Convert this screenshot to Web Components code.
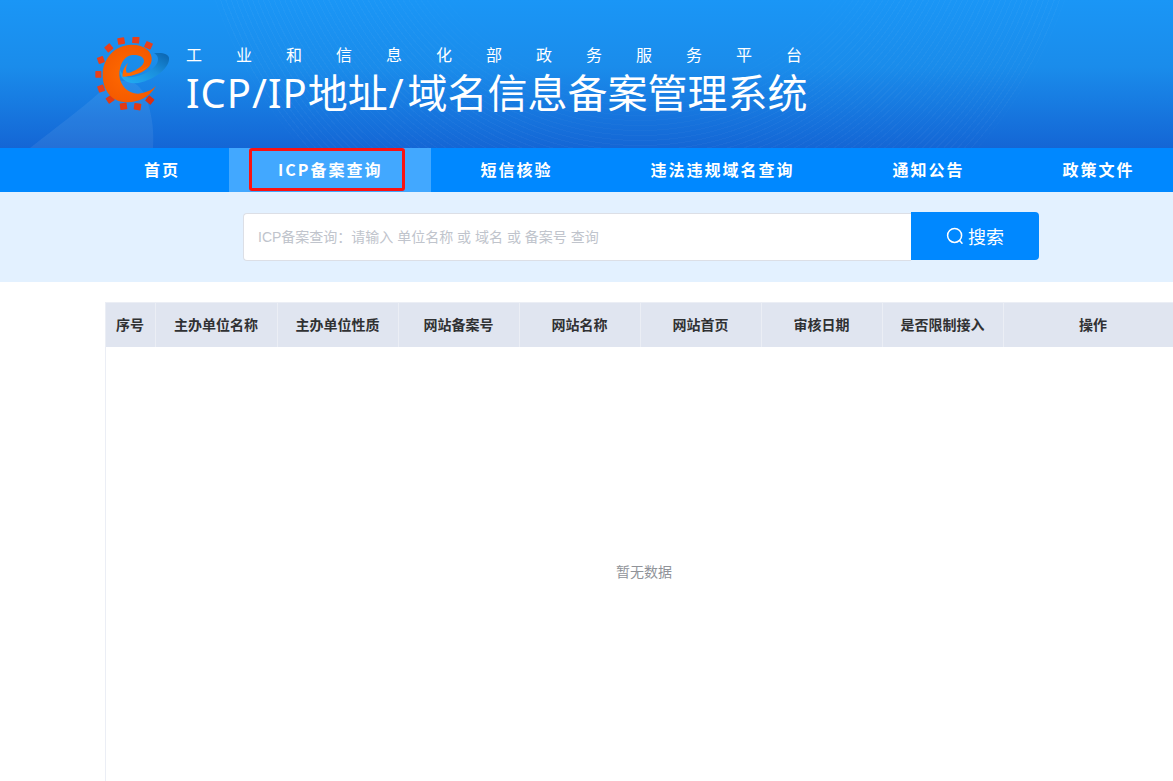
<!DOCTYPE html>
<html lang="zh"><head><meta charset="utf-8"><title>ICP/IP地址/域名信息备案管理系统</title>
<style>
html,body{margin:0;height:781px;overflow:hidden;background:#fff}
body{font-family:"Noto Sans CJK SC","Liberation Sans",sans-serif}
</style></head><body>
<icp-app>
  <site-header slot="header" sub="工业和信息化部政务服务平台"><span class="x">ICP/IP</span>地址<span class="y">/</span>域名信息备案管理系统</site-header>
  <site-nav slot="nav">
    <nav-item>首页</nav-item>
    <nav-item active marked>ICP备案查询</nav-item>
    <nav-item>短信核验</nav-item>
    <nav-item>违法违规域名查询</nav-item>
    <nav-item>通知公告</nav-item>
    <nav-item>政策文件</nav-item>
  </site-nav>
  <search-band slot="search" placeholder="ICP备案查询：请输入 单位名称 或 域名 或 备案号 查询"></search-band>
  <data-table slot="table" empty="暂无数据">
    <table-head>序号</table-head>
    <table-head>主办单位名称</table-head>
    <table-head>主办单位性质</table-head>
    <table-head>网站备案号</table-head>
    <table-head>网站名称</table-head>
    <table-head>网站首页</table-head>
    <table-head>审核日期</table-head>
    <table-head>是否限制接入</table-head>
    <table-head>操作</table-head>
  </data-table>
</icp-app>
<script>
const FONT='"Noto Sans CJK SC","Liberation Sans",sans-serif';
function def(name,html,init){
  customElements.define(name,class extends HTMLElement{
    constructor(){super();this.attachShadow({mode:'open'}).innerHTML=html;}
    connectedCallback(){if(init)init(this,this.shadowRoot);}
  });
}
def('icp-app',`<style>:host{display:flex;flex-direction:column;width:1173px;height:781px;overflow:hidden}</style>
<slot name="header"></slot><slot name="nav"></slot><slot name="search"></slot><slot name="table"></slot>`);

def('site-header',`<style>
:host{display:flex;align-items:flex-start;flex:none;height:148px;box-sizing:border-box;padding:37px 0 0 95px;color:#fff;position:relative;overflow:hidden;
 background:linear-gradient(180deg,#1a96f6 0%,#1a8ceb 45%,#1466d5 100%)}
.waves{position:absolute;inset:0;
 background:repeating-radial-gradient(circle at 640px -150px,rgba(255,255,255,.03) 0 1px,transparent 1px 5px);
 mask-image:radial-gradient(circle at 640px -150px,transparent 0 220px,#000 300px,#000 448px,transparent 452px);
 -webkit-mask-image:radial-gradient(circle at 640px -150px,transparent 0 220px,#000 300px,#000 448px,transparent 452px)}
.hill{position:absolute;left:0;top:0}
.logo{flex:none;width:75px;height:75px;position:relative}
.txt{margin-left:17px;position:relative;width:640px}
.sub{font:400 16px/20px ${FONT};letter-spacing:34px;white-space:nowrap;margin:7px 0 0 -1px}
.ttl{font:400 40px/50px "Noto Sans",${FONT};white-space:nowrap;margin:4px 0 0 -1px;height:50px}
::slotted(.x){letter-spacing:1px}
::slotted(.y){letter-spacing:4px;margin-left:1px}
</style>
<div class="waves"></div>
<svg class="hill" width="170" height="148" viewBox="0 0 170 148"><path d="M30 148C58 126 80 110 100 92C118 76 138 76 147 100C153 118 154 134 153 148Z" fill="#fff" fill-opacity=".07"/></svg>
<svg class="logo" viewBox="45 35 225 225">
 <defs>
  <linearGradient id="b" x1="0" y1="1" x2="1" y2="0"><stop offset="0" stop-color="#22b0f5"/><stop offset=".55" stop-color="#1a8fdd"/><stop offset="1" stop-color="#0a62ad"/></linearGradient>
  <radialGradient id="o" cx=".45" cy=".5" r=".65"><stop offset="0" stop-color="#ff6a00"/><stop offset="1" stop-color="#f25600"/></radialGradient>
 </defs>
 <g fill="#e8401a">
  <rect x="113" y="37" width="21" height="20" rx="2" transform="rotate(-10 123 47)"/>
  <rect x="157" y="34" width="21" height="20" rx="2" transform="rotate(5 167 43)"/>
  <rect x="195" y="50" width="21" height="20" rx="2" transform="rotate(25 205 60)"/>
  <rect x="76" y="58" width="21" height="20" rx="2" transform="rotate(-40 86 68)"/>
  <rect x="53" y="94" width="19" height="20" rx="2" transform="rotate(-20 62 104)"/>
  <rect x="46" y="137" width="18" height="20" rx="2"/>
  <rect x="54" y="180" width="19" height="20" rx="2" transform="rotate(-20 63 190)"/>
  <rect x="80" y="212" width="21" height="20" rx="2" transform="rotate(-35 90 222)" fill="#e23a14"/>
  <rect x="120" y="233" width="21" height="20" rx="2" transform="rotate(-8 130 243)" fill="#e23a14"/>
  <rect x="162" y="234" width="21" height="20" rx="2" transform="rotate(8 172 244)" fill="#e23a14"/>
  <rect x="199" y="214" width="21" height="20" rx="2" transform="rotate(40 209 224)" fill="#dc2f10"/>
 </g>
 <path fill="url(#o)" d="M228 182C205 222 165 234 130 230C90 224 68 190 68 148C68 100 105 58 155 58C195 58 218 80 215 105C212 135 170 152 128 154C150 140 190 130 192 108C193 92 170 86 152 90C130 96 118 120 118 150C120 185 150 207 175 205C195 203 215 195 228 182Z"/>
 <path fill="url(#b)" d="M120 132C116 165 150 182 187 170C232 156 270 125 267 97C265 85 245 80 222 84C240 92 238 115 215 132C190 150 150 162 135 152C126 146 122 140 120 132Z"/>
 <path fill="#ff6a00" d="M145 112C132 124 126 140 128 154C150 154 190 140 210 118C190 132 160 144 140 142C136 134 138 122 145 112Z"/>
</svg>
<div class="txt"><div class="sub"></div><div class="ttl"><slot></slot></div></div>`,
(el,s)=>{s.querySelector('.sub').textContent=el.getAttribute('sub');});

def('site-nav',`<style>:host{display:flex;flex:none;height:44px;background:#0088ff;padding-left:95px;overflow:hidden}</style><slot></slot>`);

def('nav-item',`<style>
:host{display:flex;align-items:center;justify-content:center;flex:none;height:44px;box-sizing:border-box;padding:0 49px 2px;position:relative;color:#fff;font:700 16px/1 ${FONT};letter-spacing:2px;white-space:nowrap}
:host([active]){background:#42a8ff}
.mark{display:none;position:absolute;left:20px;top:0;width:156px;height:43px;box-sizing:border-box;border:3px solid #fa1212;border-radius:3px}
:host([marked]) .mark{display:block}
</style><span class="mark"></span><slot></slot>`);

def('search-band',`<style>
:host{display:flex;flex:none;height:90px;box-sizing:border-box;background:#e3f1ff;padding:20px 0 0 243px;align-items:flex-start}
.box{width:668px;height:48px;margin-top:1px;box-sizing:border-box;background:#fff;border:1px solid #dcdfe6;border-right:0;border-radius:4px 0 0 4px;display:flex;align-items:center;padding:0 0 0 14px;font:400 14px/1 "Liberation Sans",${FONT};color:#c0c4cc;white-space:pre}
.btn{width:128px;height:48px;background:#0088ff;color:#fff;border-radius:0 4px 4px 0;display:flex;align-items:center;justify-content:center;gap:4px;font:400 18px/1 ${FONT}}
</style>
<div class="box"></div>
<div class="btn"><svg width="18" height="18" viewBox="0 0 18 18" fill="none" stroke="#fff" stroke-width="1.5" stroke-linecap="round"><circle cx="8.6" cy="8.4" r="7"/><path d="M13.6 13.6L16 16.2"/></svg><span>搜索</span></div>`,
(el,s)=>{s.querySelector('.box').textContent=el.getAttribute('placeholder');});

def('data-table',`<style>
:host{display:flex;flex-direction:column;flex:none;box-sizing:border-box;width:1079px;height:495px;margin:20px 0 0 105px;border-left:1px solid #ebeef5;border-top:1px solid #ebeef5}
.head{display:grid;grid-template-columns:50px 122px repeat(6,121px) 180px;height:44px;background:#e0e5f0;flex:none}
.empty{flex:1;display:flex;align-items:center;justify-content:center;box-sizing:border-box;padding:0 2px 2px 0;font:400 14px/1 ${FONT};color:#909399}
</style><div class="head"><slot></slot></div><div class="empty"></div>`,
(el,s)=>{s.querySelector('.empty').textContent=el.getAttribute('empty');});

def('table-head',`<style>
:host{display:flex;align-items:center;justify-content:center;box-sizing:border-box;padding:0 1px 2px 0;border-right:1px solid #ebeef5;font:700 14px/1 ${FONT};color:#303133;white-space:nowrap}
</style><slot></slot>`);
</script>
</body></html>
